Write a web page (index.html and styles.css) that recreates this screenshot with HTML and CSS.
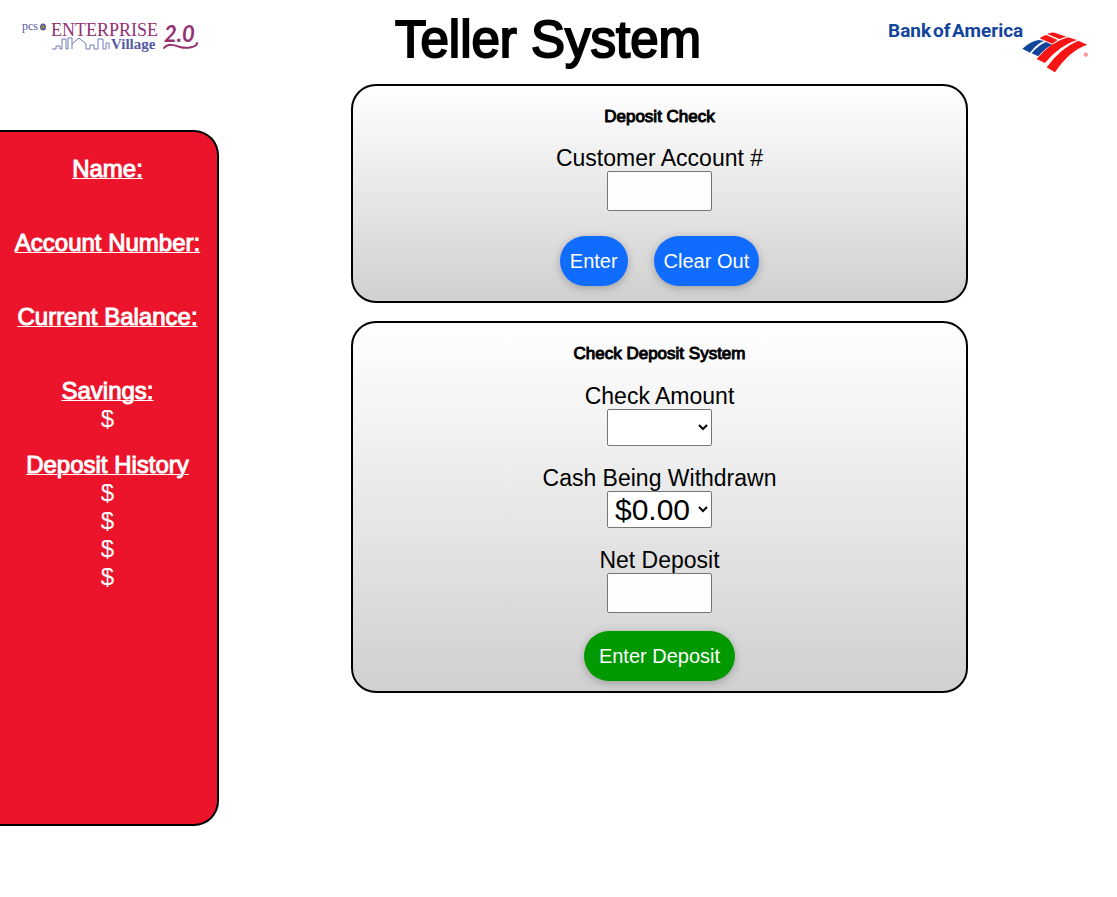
FILE: index.html
```html
<!DOCTYPE html>
<html lang="en">
<head>
<meta charset="utf-8">
<title>Teller System</title>
<link rel="stylesheet" href="styles.css">
</head>
<body>
<header class="header">
  <svg class="logo-village" viewBox="0 0 180 36" role="img" aria-label="PCS Enterprise Village 2.0">
    <text class="ink-indigo serif" x="0" y="12" font-size="12">pcs</text>
    <ellipse cx="21" cy="9" rx="3" ry="3.5" fill="#5557a5"/>
    <circle cx="21" cy="9" r="2" fill="#8d8748"/>
    <text class="ink-plum serif" x="29" y="18" font-size="18">ENTERPRISE</text>
    <path class="skyline" d="M30 31h4v-3h4v3h2V21h4v10h2V20h4v11M50 26l7-6 7 6v5h4v-4h4v4h4V21h5v10h3v-6h3v6"/>
    <text class="ink-indigo serif strong" x="89" y="31" font-size="15">Village</text>
    <text class="ink-plum script" x="142" y="24" font-size="22">2.0</text>
    <path class="swash" d="M142 30c4-5 10-3 16-1 7 2 17 0 17-4"/>
  </svg>
  <h1 class="title">Teller System</h1>
  <svg class="logo-bank" viewBox="0 0 200 58" role="img" aria-label="Bank of America">
    <text class="bank-name" y="21" font-size="19"><tspan x="0">Bank</tspan><tspan x="45">of</tspan><tspan x="64">America</tspan></text>
    <g transform="translate(130 12) scale(0.333)">
      <path fill="#12459a" d="M13 62Q38 40 62 36L79 39Q57 46 36 74ZM41 76Q60 52 84 42L103 50Q80 61 61 85Z"/>
      <path fill="#f91414" d="M88 18Q98 12 110 14L145 26L124 33ZM65 31Q74 24 85 21L119 36L103 47Z"/>
      <path fill="#f91414" d="M56 93Q98 42 150 28L177 36Q124 52 81 105ZM86 118Q128 60 181 38L208 50Q154 68 111 133Z"/>
      <circle cx="204" cy="80" r="5" fill="none" stroke="#f91414" stroke-width="1.5"/>
      <path fill="none" stroke="#f91414" stroke-width="1" d="M202 83v-6h3v3h-3l4 3"/>
    </g>
  </svg>
</header>
<div class="layout">
  <aside class="sidebar">
    <section class="entry"><h2>Name:</h2></section>
    <section class="entry"><h2>Account Number:</h2></section>
    <section class="entry"><h2>Current Balance:</h2></section>
    <section class="entry"><h2>Savings:</h2><p>$</p></section>
    <section class="entry"><h2>Deposit History</h2><p>$</p><p>$</p><p>$</p><p>$</p></section>
  </aside>
  <main class="main">
    <form class="panel">
      <h3>Deposit Check</h3>
      <div class="field"><label for="account">Customer Account #</label><input id="account" type="text"></div>
      <div class="actions"><button class="btn" type="button">Enter</button><button class="btn" type="button">Clear Out</button></div>
    </form>
    <form class="panel">
      <h3>Check Deposit System</h3>
      <div class="field"><label for="amount">Check Amount</label><select id="amount"><option></option></select></div>
      <div class="field"><label for="cash">Cash Being Withdrawn</label><select id="cash"><option>$0.00</option></select></div>
      <div class="field"><label for="net">Net Deposit</label><input id="net" type="text"></div>
      <button class="btn btn-deposit" type="button">Enter Deposit</button>
    </form>
  </main>
</div>
</body>
</html>
```
FILE: styles.css
```css
* { box-sizing: border-box; }
body { margin: 0; background: #fff; color: #000; font-family: "Liberation Sans", Arial, sans-serif; }
h1, h2, h3, p { margin: 0; font-weight: 400; -webkit-text-stroke: 1px currentColor; }
p { -webkit-text-stroke: 0; }
.header { display: grid; grid-template-columns: 1fr auto 1fr; align-items: start; padding: 12px 29px 0 22px; height: 84px; }
.title { margin-right: 14px; font-size: 51px; line-height: 56px; -webkit-text-stroke: 2px currentColor; }
.logo-village { width: 180px; margin-top: 6px; }
.logo-bank { width: 200px; margin-top: 4px; justify-self: end; }
.serif { font-family: "Liberation Serif", serif; }
.script { font-family: Lato, sans-serif; font-style: italic; font-weight: 700; }
.strong { font-weight: 700; }
.ink-indigo { fill: #5557a5; }
.ink-plum { fill: #943071; }
.skyline { fill: none; stroke: #6f7dba; stroke-width: 1; }
.swash { fill: none; stroke: #943071; stroke-width: 2; stroke-linecap: round; }
.bank-name { font-family: Roboto, "Liberation Sans", sans-serif; font-weight: 700; fill: #12459a; }
.layout { display: flex; align-items: flex-start; }
.sidebar { flex: 0 0 219px; margin-top: 46px; min-height: 696px; padding: 23px 2px 23px 0; background: #eb142b; color: #fff; border: 2px solid #000; border-left: 0; border-radius: 0 25px 25px 0; text-align: center; font-size: 24px; line-height: 28px; }
.entry { min-height: 56px; margin-bottom: 18px; }
.entry h2 { font-size: 24px; text-decoration: underline; text-decoration-thickness: 1px; }
.main { flex: 1; display: flex; flex-direction: column; gap: 18px; padding: 0 149px 0 132px; }
.panel { display: flex; flex-direction: column; align-items: center; padding: 20px 16px 15px; border: 2px solid #000; border-radius: 25px; background: linear-gradient(#fff, #d0d0d0); }
.panel h3 { font-size: 17px; line-height: 22px; margin-bottom: 16px; }
.field { display: flex; flex-direction: column; align-items: center; margin-bottom: 18px; }
.field label { padding-top: 2px; font-size: 23px; line-height: 25px; }
.field input, .field select { width: 105px; font-family: inherit; font-size: 30px; border: 1px solid #767676; border-radius: 2px; background: #fdfdfd; color: #000; }
.field input { height: 40px; }
.field select { height: 37px; padding-left: 3px; background: #fff; }
.actions { display: flex; gap: 26px; margin-top: 7px; }
.btn { height: 50px; padding: 0 10px; border: 0; border-radius: 25px; background: #106bff; color: #fff; font-family: inherit; font-size: 20px; box-shadow: 0 2px 8px rgba(0, 0, 0, 0.25); }
.btn-deposit { padding: 0 15px; background: #009900; }
.panel:last-child { padding-bottom: 10px; }
.panel:last-child h3 { margin-bottom: 17px; }
```
